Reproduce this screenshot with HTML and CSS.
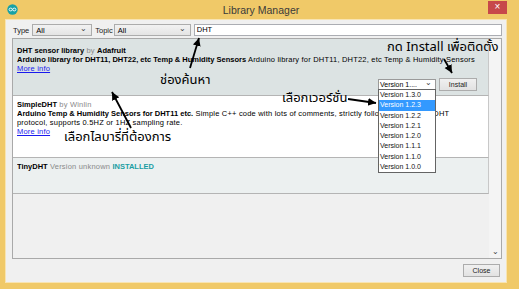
FILE: index.html
```html
<!DOCTYPE html>
<html lang="th">
<head>
    <meta charset="UTF-8">
    <title>Library Manager</title>
    <link rel="stylesheet" href="styles.css">
</head>
<body>
    <div class="window">
        <div class="titlebar">
            <span class="app-icon">
                <svg width="11" height="11" viewBox="0 0 11 11">
                    <circle cx="5.5" cy="5.5" r="5.2" fill="#17a1a5"/>
                    <ellipse cx="3.7" cy="5.5" rx="1.6" ry="1.4" fill="none" stroke="#fff" stroke-width="0.9"/>
                    <ellipse cx="7.3" cy="5.5" rx="1.6" ry="1.4" fill="none" stroke="#fff" stroke-width="0.9"/>
                </svg>
            </span>
            <span class="title">Library Manager</span>
            <span class="close-x">&#215;</span>
        </div>

        <div class="client">
            <div class="filters">
                <span class="label label-type">Type</span>
                <div class="combo combo-type"><span>All</span><span class="chev">&#8964;</span></div>
                <span class="label label-topic">Topic</span>
                <div class="combo combo-topic"><span>All</span><span class="chev">&#8964;</span></div>
                <div class="search">DHT</div>
            </div>

            <div class="list">
                <div class="items">
                    <div class="lib lib-hover">
                        <div class="line"><b>DHT sensor library</b> <span class="muted">by</span> <b>Adafruit</b></div>
                        <div class="line"><b>Arduino library for DHT11, DHT22, etc Temp &amp; Humidity Sensors</b> Arduino library for DHT11, DHT22, etc Temp &amp; Humidity Sensors</div>
                        <div class="line"><a class="more">More info</a></div>
                        <div class="actions">
                            <div class="combo combo-version"><span>Version 1....</span><span class="chev">&#8964;</span></div>
                            <button class="btn btn-install">Install</button>
                        </div>
                    </div>
                    <div class="lib lib-plain">
                        <div class="line"><b>SimpleDHT</b> <span class="muted">by</span> <span class="muted">Winlin</span></div>
                        <div class="line"><b>Arduino Temp &amp; Humidity Sensors for DHT11 etc.</b> Simple C++ code with lots of comments, strictly follow the standard DHT</div>
                        <div class="line">protocol, supports 0.5HZ or 1HZ sampling rate.</div>
                        <div class="line"><a class="more">More info</a></div>
                    </div>
                    <div class="lib lib-installed">
                        <div class="line"><b>TinyDHT</b> <span class="muted">Version unknown</span> <b class="installed">INSTALLED</b></div>
                    </div>
                </div>
                <div class="scrollbar"><span class="chev">&#8964;</span></div>
            </div>

            <div class="footer">
                <button class="btn btn-close">Close</button>
            </div>
        </div>

        <ul class="version-list">
            <li>Version 1.3.0</li>
            <li class="active">Version 1.2.3</li>
            <li>Version 1.2.2</li>
            <li>Version 1.2.1</li>
            <li>Version 1.2.0</li>
            <li>Version 1.1.1</li>
            <li>Version 1.1.0</li>
            <li>Version 1.0.0</li>
        </ul>

        <!-- คำอธิบายที่เขียนทับภาพ -->
        <div class="note note-install">กด Install เพื่อติดตั้ง</div>
        <div class="note note-search">ช่องค้นหา</div>
        <div class="note note-version">เลือกเวอร์ชั่น</div>
        <div class="note note-library">เลือกไลบารี่ที่ต้องการ</div>

        <svg class="arrows" width="519" height="289" viewBox="0 0 519 289">
            <defs>
                <marker id="head" markerUnits="userSpaceOnUse" markerWidth="10" markerHeight="10" refX="8" refY="4" orient="auto">
                    <polygon points="0,0 8,4 0,8" fill="#000"/>
                </marker>
            </defs>
            <line x1="190" y1="68" x2="199" y2="38" stroke="#000" stroke-width="1.8" marker-end="url(#head)"/>
            <line x1="131" y1="128" x2="112" y2="92" stroke="#000" stroke-width="1.8" marker-end="url(#head)"/>
            <line x1="348" y1="99" x2="376" y2="103" stroke="#000" stroke-width="1.8" marker-end="url(#head)"/>
            <line x1="444" y1="59" x2="452" y2="73" stroke="#000" stroke-width="1.8" marker-end="url(#head)"/>
        </svg>
    </div>
</body>
</html>
```

FILE: styles.css
```css
* {
    box-sizing: border-box;
}

body {
    margin: 0;
    width: 519px;
    height: 289px;
    overflow: hidden;
    background: #f0c968;
    font-family: "Liberation Sans", Arial, sans-serif;
    font-size: 7.5px;
    color: #000;
}

.window {
    position: relative;
    height: 289px;
    display: flex;
    flex-direction: column;
    padding: 0 12px 6px 5px;
}

.titlebar {
    height: 19px;
    display: flex;
    align-items: center;
    position: relative;
}

.app-icon {
    margin-left: 2px;
    display: flex;
}

.title {
    flex: 1;
    text-align: center;
    font-size: 10.5px;
    color: #3a3a3a;
    padding-left: 16px;
}

.close-x {
    width: 19px;
    height: 13px;
    margin-top: -4px;
    background: #c7484a;
    color: #fff;
    font-size: 10px;
    line-height: 12px;
    text-align: center;
}

.client {
    flex: 1;
    min-width: 0;
    display: flex;
    flex-direction: column;
    background: #f0f0f0;
    border: 1px solid #f8e4b2;
    padding: 4px 4px 5px 6px;
}

.filters {
    height: 12px;
    display: flex;
    align-items: center;
    margin-bottom: 2px;
}

.label {
    color: #222;
}

.label-type {
    margin-left: 1px;
    margin-right: 3px;
}

.label-topic {
    margin-left: 3px;
    margin-right: 1px;
}

.combo {
    height: 12px;
    display: flex;
    align-items: center;
    justify-content: space-between;
    border: 1px solid #acacac;
    background: linear-gradient(#f2f2f2, #e4e4e4);
    padding: 0 4px 0 3px;
}

.combo-type {
    width: 60px;
}

.combo-topic {
    width: 77px;
}

.chev {
    font-size: 8px;
    line-height: 6px;
    color: #444;
    margin-top: -3px;
}

.search {
    flex: 1;
    height: 12px;
    margin-left: 3px;
    border: 1px solid #abadb3;
    background: #fff;
    padding: 0 2px;
    line-height: 10px;
}

.list {
    flex: 1;
    display: flex;
    border: 1px solid #a9a9a9;
    background: #f0f0f0;
}

.items {
    flex: 1;
    min-width: 0;
    display: flex;
    flex-direction: column;
}

.lib {
    border-bottom: 1px solid #b4b4b4;
    border-right: 1px solid #c8c8c8;
    padding: 5px 11px 0 4px;
    overflow: hidden;
}

.lib-hover {
    height: 57px;
    background: #dce3e3;
    padding-top: 7px;
}

.lib-plain {
    height: 62px;
    background: #fff;
    padding-top: 4px;
}

.lib-installed {
    height: 36px;
    background: #ecf0f0;
    padding-top: 4px;
}

.line {
    height: 9px;
    line-height: 9px;
    white-space: nowrap;
    overflow: hidden;
    letter-spacing: 0.2px;
}

.line b {
    letter-spacing: 0;
}

.muted {
    color: #8a8a8a;
}

.installed {
    color: #1a9ea3;
}

.more {
    color: #1a1aee;
    text-decoration: underline;
}

.actions {
    display: flex;
    justify-content: flex-end;
    align-items: center;
    margin-top: 5px;
}

.combo-version {
    width: 58px;
    height: 11px;
    background: #fff;
    border-color: #9a9a9a;
    padding: 0 3px 0 1px;
    margin-right: 3px;
    font-size: 7px;
}

.btn {
    font-family: "Liberation Sans", Arial, sans-serif;
    font-size: 7px;
    color: #222;
    background: linear-gradient(#f0f0f0, #e2e2e2);
    border: 1px solid #acacac;
    padding: 0;
}

.btn-install {
    width: 38px;
    height: 13px;
}

.scrollbar {
    width: 12px;
    display: flex;
    align-items: flex-end;
    justify-content: center;
    padding-bottom: 3px;
    background: #f4f4f4;
}

.footer {
    display: flex;
    justify-content: flex-end;
    margin-top: 5px;
    padding-right: 2px;
}

.btn-close {
    width: 37px;
    height: 13px;
}

.version-list {
    position: absolute;
    left: 378px;
    top: 89px;
    width: 58px;
    margin: 0;
    padding: 0;
    list-style: none;
    background: #fff;
    border: 1px solid #646464;
    font-size: 7px;
}

.version-list li {
    height: 10.3px;
    line-height: 10.3px;
    padding-left: 1px;
    color: #111;
}

.version-list .active {
    background: #3399ff;
    color: #fff;
}

.note {
    position: absolute;
    font-family: "Noto Sans Thai", "Noto Sans", "DejaVu Sans", sans-serif;
    font-size: 13px;
    line-height: 14px;
    color: #000;
    white-space: nowrap;
}

.note-install {
    left: 387px;
    top: 40px;
}

.note-search {
    left: 160px;
    top: 73px;
}

.note-version {
    left: 282px;
    top: 91px;
}

.note-library {
    left: 64px;
    top: 130px;
}

.arrows {
    position: absolute;
    left: 0;
    top: 0;
    pointer-events: none;
}
```
